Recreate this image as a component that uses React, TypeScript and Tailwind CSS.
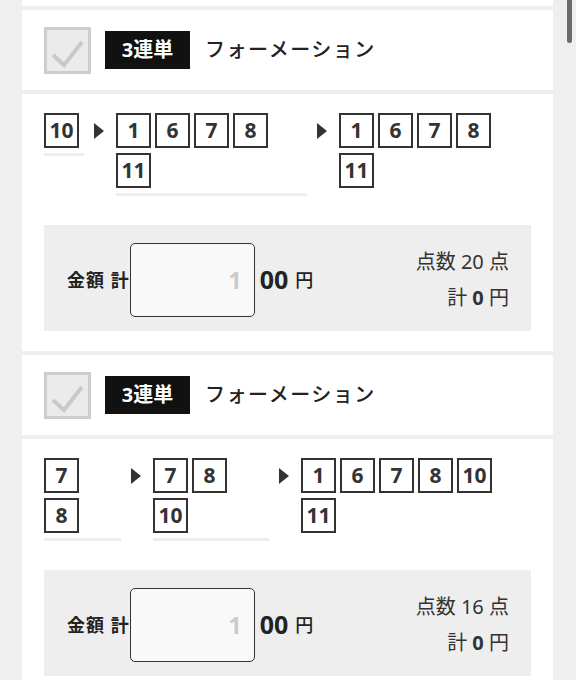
import React from "react";

type Col = { nums: string[]; width?: string; line?: boolean };

type Bet = {
    cols: Col[];
    points: number;
};

const bets: Bet[] = [
    {
        cols: [
            { nums: ['10'], width: 'w-[40px]', line: true },
            { nums: ['1', '6', '7', '8', '11'], width: 'w-[191px]', line: true },
            { nums: ['1', '6', '7', '8', '11'] },
        ],
        points: 20,
    },
    {
        cols: [
            { nums: ['7', '8'], width: 'w-[77px]', line: true },
            { nums: ['7', '8', '10'], width: 'w-[116px]', line: true },
            { nums: ['1', '6', '7', '8', '10', '11'] },
        ],
        points: 16,
    },
];

const font = { fontFamily: '"Noto Sans", "Noto Sans CJK JP", sans-serif' };

const Arrow = () => (
    <div className="ml-[10px] mr-[12px] mt-[10px] shrink-0">
        <svg width="10" height="16" viewBox="0 0 10 16">
            <polygon points="0,0 10,8 0,16" fill="#333" />
        </svg>
    </div>
);

const NumBox = ({ n }: { n: string }) => (
    <div className="w-[35px] h-[35px] mr-[4px] mb-[5px] border-2 border-[#333] flex items-center justify-center text-[21px] font-bold text-[#333] leading-none">
        {n}
    </div>
);

const Header = () => (
    <div className="bg-white h-[80px] flex items-center pl-[22px]">
        <div className="w-[47px] h-[47px] border-[3px] border-[#cdcdcd] bg-[#ebebeb] flex items-center justify-center">
            <svg width="41" height="41" viewBox="0 0 41 41">
                <polyline points="6,25 17,35 35,12" fill="none" stroke="#c9c9c9" strokeWidth="4" />
            </svg>
        </div>
        <div className="ml-[14px] w-[85px] h-[38px] bg-[#111] text-white text-[20px] font-bold flex items-center justify-center">
            3連単
        </div>
        <div className="ml-[15px] text-[20px] font-medium text-[#222] tracking-[1.5px]">フォーメーション</div>
    </div>
);

const BetCard = ({ bet }: { bet: Bet }) => (
    <div className="bg-white px-[22px] pt-[19px] pb-[20px]">
        <div className="flex items-start">
            {bet.cols.map((col, i) => (
                <React.Fragment key={i}>
                    {i > 0 && <Arrow />}
                    <div className={col.width ? `${col.width} shrink-0` : 'flex-1'}>
                        <div className="flex flex-wrap">
                            {col.nums.map((n, j) => (
                                <NumBox key={j} n={n} />
                            ))}
                        </div>
                        {col.line && <div className="h-[3px] bg-[#eeeeee]"></div>}
                    </div>
                </React.Fragment>
            ))}
        </div>

        <div className="mt-[29px] bg-[#eeeeee] flex items-center justify-between pl-[23px] pr-[22px] pt-[18px] pb-[14px]">
            <div className="flex items-center text-[#222]">
                <span className="text-[18px] font-bold tracking-[1px]">金額 計</span>
                <div className="w-[125px] h-[74px] border-[1.5px] border-[#333] rounded-[5px] bg-[#f9f9f9] flex items-center justify-end pr-[12px] text-[23px] font-bold text-[#cbcbcb]">
                    1
                </div>
                <span className="ml-[5px] text-[25px] font-bold">00</span>
                <span className="ml-[7px] text-[18px] font-medium">円</span>
            </div>
            <div className="text-right text-[20px] leading-[36px] text-[#333]">
                <div>点数 {bet.points} 点</div>
                <div>
                    計 <span className="font-bold">0</span> 円
                </div>
            </div>
        </div>
    </div>
);

const App = () => {
    return (
        <div className="relative h-[680px] overflow-hidden bg-[#efefef] pl-[22px] pr-[23px]" style={font}>
            <div className="flex flex-col gap-[4px]">
                <div className="bg-white h-[6px]"></div>
                {bets.map((bet, i) => (
                    <React.Fragment key={i}>
                        <Header />
                        <BetCard bet={bet} />
                    </React.Fragment>
                ))}
            </div>
            <div className="absolute top-0 right-[4px] w-[5px] h-[43px] bg-[#6b6b6b] rounded-b-[3px]"></div>
        </div>
    );
};

export default App;
